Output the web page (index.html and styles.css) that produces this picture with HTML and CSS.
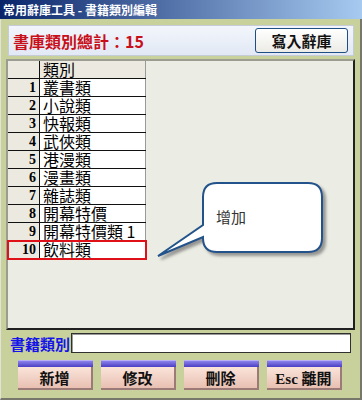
FILE: index.html
```html
<!DOCTYPE html>
<html lang="zh-Hant">
<head>
  <meta charset="UTF-8">
  <meta name="viewport" content="width=device-width, initial-scale=1.0">
  <title>常用辭庫工具 - 書籍類別編輯</title>
  <link rel="stylesheet" href="styles.css">
</head>
<body>
  <div class="window">
    <div class="titlebar">常用辭庫工具 - 書籍類別編輯</div>

    <div class="frame">
      <!-- Encabezado con total y botón -->
      <div class="summary">
        <span class="total">書庫類別總計：15</span>
        <button class="write-button">寫入辭庫</button>
      </div>

      <!-- Tabla de categorías -->
      <div class="grid">
        <div class="row head">
          <div class="num"></div>
          <div class="name">類別</div>
        </div>
        <div class="row"><div class="num">1</div><div class="name">叢書類</div></div>
        <div class="row"><div class="num">2</div><div class="name">小說類</div></div>
        <div class="row"><div class="num">3</div><div class="name">快報類</div></div>
        <div class="row"><div class="num">4</div><div class="name">武俠類</div></div>
        <div class="row"><div class="num">5</div><div class="name">港漫類</div></div>
        <div class="row"><div class="num">6</div><div class="name">漫畫類</div></div>
        <div class="row"><div class="num">7</div><div class="name">雜誌類</div></div>
        <div class="row"><div class="num">8</div><div class="name">開幕特價</div></div>
        <div class="row"><div class="num">9</div><div class="name">開幕特價類 1</div></div>
        <div class="row selected"><div class="num">10</div><div class="name">飲料類</div></div>

        <!-- Globo de ayuda -->
        <svg class="callout" width="185" height="92" viewBox="0 0 185 92">
          <defs>
            <filter id="shadow" x="-20%" y="-20%" width="140%" height="150%">
              <feDropShadow dx="3" dy="3" stdDeviation="1.5" flood-color="#707070" flood-opacity="0.7"/>
            </filter>
          </defs>
          <path d="M67 8 H158 Q172 8 172 22 V63 Q172 77 158 77 H67 Q53 77 53 63 V62 L8 81 L53 50 V22 Q53 8 67 8 Z"
                fill="#fff" stroke="#22528a" stroke-width="2" filter="url(#shadow)"/>
          <text x="66" y="48" class="callout-text">增加</text>
        </svg>
      </div>

      <!-- Campo de edición -->
      <div class="edit-row">
        <label class="edit-label" for="category">書籍類別</label>
        <input class="edit-input" type="text" id="category">
      </div>

      <!-- Botones de acción -->
      <div class="actions">
        <button class="action"><span class="strip"></span><span class="face">新增</span></button>
        <button class="action"><span class="strip"></span><span class="face">修改</span></button>
        <button class="action"><span class="strip"></span><span class="face">刪除</span></button>
        <button class="action"><span class="strip"></span><span class="face latin">Esc 離開</span></button>
      </div>
    </div>
  </div>
</body>
</html>
```

FILE: styles.css
```css
/* Ventana principal */
body {
  margin: 0;
  font-family: "Noto Sans CJK TC", sans-serif;
}
.window {
  width: 362px;
  height: 400px;
  display: flex;
  flex-direction: column;
  background: #c8d19c;
}
.titlebar {
  height: 19px;
  line-height: 19px;
  padding-left: 3px;
  color: #fff;
  font-size: 12px;
  font-weight: bold;
  background: linear-gradient(to right, #0a246a, #a6caf0);
}
.frame {
  flex: 1;
  display: flex;
  flex-direction: column;
  padding: 6px 5px 0 5px;
  border-left: 1px solid #e2e2da;
  border-right: 2px solid #77776b;
  border-bottom: 2px solid #77776b;
}

/* Encabezado */
.summary {
  height: 31px;
  margin: 0 1px 0 2px;
  box-sizing: border-box;
  display: flex;
  align-items: center;
  justify-content: space-between;
  padding: 0 5px 0 4px;
  border: 1px solid #c4ccd8;
  background: linear-gradient(#f2f5fb, #e2e9f5);
}
.total {
  color: #c8101a;
  font-size: 16px;
  font-weight: bold;
}
.write-button {
  width: 93px;
  height: 25px;
  padding: 0;
  border: 1px solid #1d4f86;
  border-radius: 3px;
  background: linear-gradient(#ffffff, #ecebe6);
  font-family: "Noto Sans CJK TC", sans-serif;
  font-size: 15px;
  font-weight: bold;
  color: #111;
}

/* Tabla */
.grid {
  position: relative;
  height: 271px;
  margin-top: 3px;
  box-sizing: border-box;
  background: #ebece3;
  border-top: 2px solid #9c9c90;
  border-left: 2px solid #9c9c90;
  border-right: 2px solid #202020;
  border-bottom: 2px solid #202020;
}
.row {
  display: flex;
  width: 138px;
  height: 18px;
  box-sizing: border-box;
  border-bottom: 1px solid #111;
  font-size: 16px;
  line-height: 17px;
}
.num {
  width: 32px;
  box-sizing: border-box;
  padding-right: 3px;
  text-align: right;
  background: #ebe9e0;
  border-right: 1px solid #111;
  font-family: "Liberation Serif", serif;
  font-size: 14px;
  font-weight: bold;
}
.name {
  width: 106px;
  box-sizing: border-box;
  padding-left: 3px;
  background: #fff;
  border-right: 1px solid #9a9a9a;
  white-space: nowrap;
}
.head .name {
  background: #ebe9e0;
}
.selected {
  outline: 2px solid #e01018;
  outline-offset: -1px;
}
.callout {
  position: absolute;
  left: 142px;
  top: 114px;
}
.callout-text {
  font-family: "Noto Sans CJK TC", sans-serif;
  font-size: 15px;
  fill: #333;
}

/* Campo de edición */
.edit-row {
  display: flex;
  align-items: center;
  margin-top: 3px;
  height: 20px;
}
.edit-label {
  width: 61px;
  padding-left: 4px;
  color: #1414e8;
  font-size: 15px;
  font-weight: bold;
  white-space: nowrap;
}
.edit-input {
  width: 280px;
  height: 20px;
  box-sizing: border-box;
  border: 1px solid #303030;
  box-shadow: inset 1px 1px #9a9a9a;
  background: #fff;
  margin: 0;
}

/* Botones */
.actions {
  display: flex;
  gap: 8px;
  margin-top: 7px;
  margin-left: 12px;
}
.action {
  width: 75px;
  height: 30px;
  padding: 0;
  border: none;
  display: flex;
  flex-direction: column;
  background: none;
}
.strip {
  height: 7px;
  width: 100%;
  border-top: 1px solid #b8b0f4;
  box-sizing: border-box;
  background: linear-gradient(#8c82ea, #4c3ec4);
}
.face {
  flex: 1;
  width: 100%;
  box-sizing: border-box;
  display: flex;
  align-items: center;
  justify-content: center;
  border-right: 2px solid #9b7a78;
  border-bottom: 2px solid #9b7a78;
  background: linear-gradient(#fbe4da, #e8c0b2);
  font-family: "Noto Sans CJK TC", sans-serif;
  font-size: 15px;
  font-weight: bold;
  color: #111;
}
.latin {
  font-family: "Liberation Serif", "Noto Sans CJK TC", serif;
}
```
